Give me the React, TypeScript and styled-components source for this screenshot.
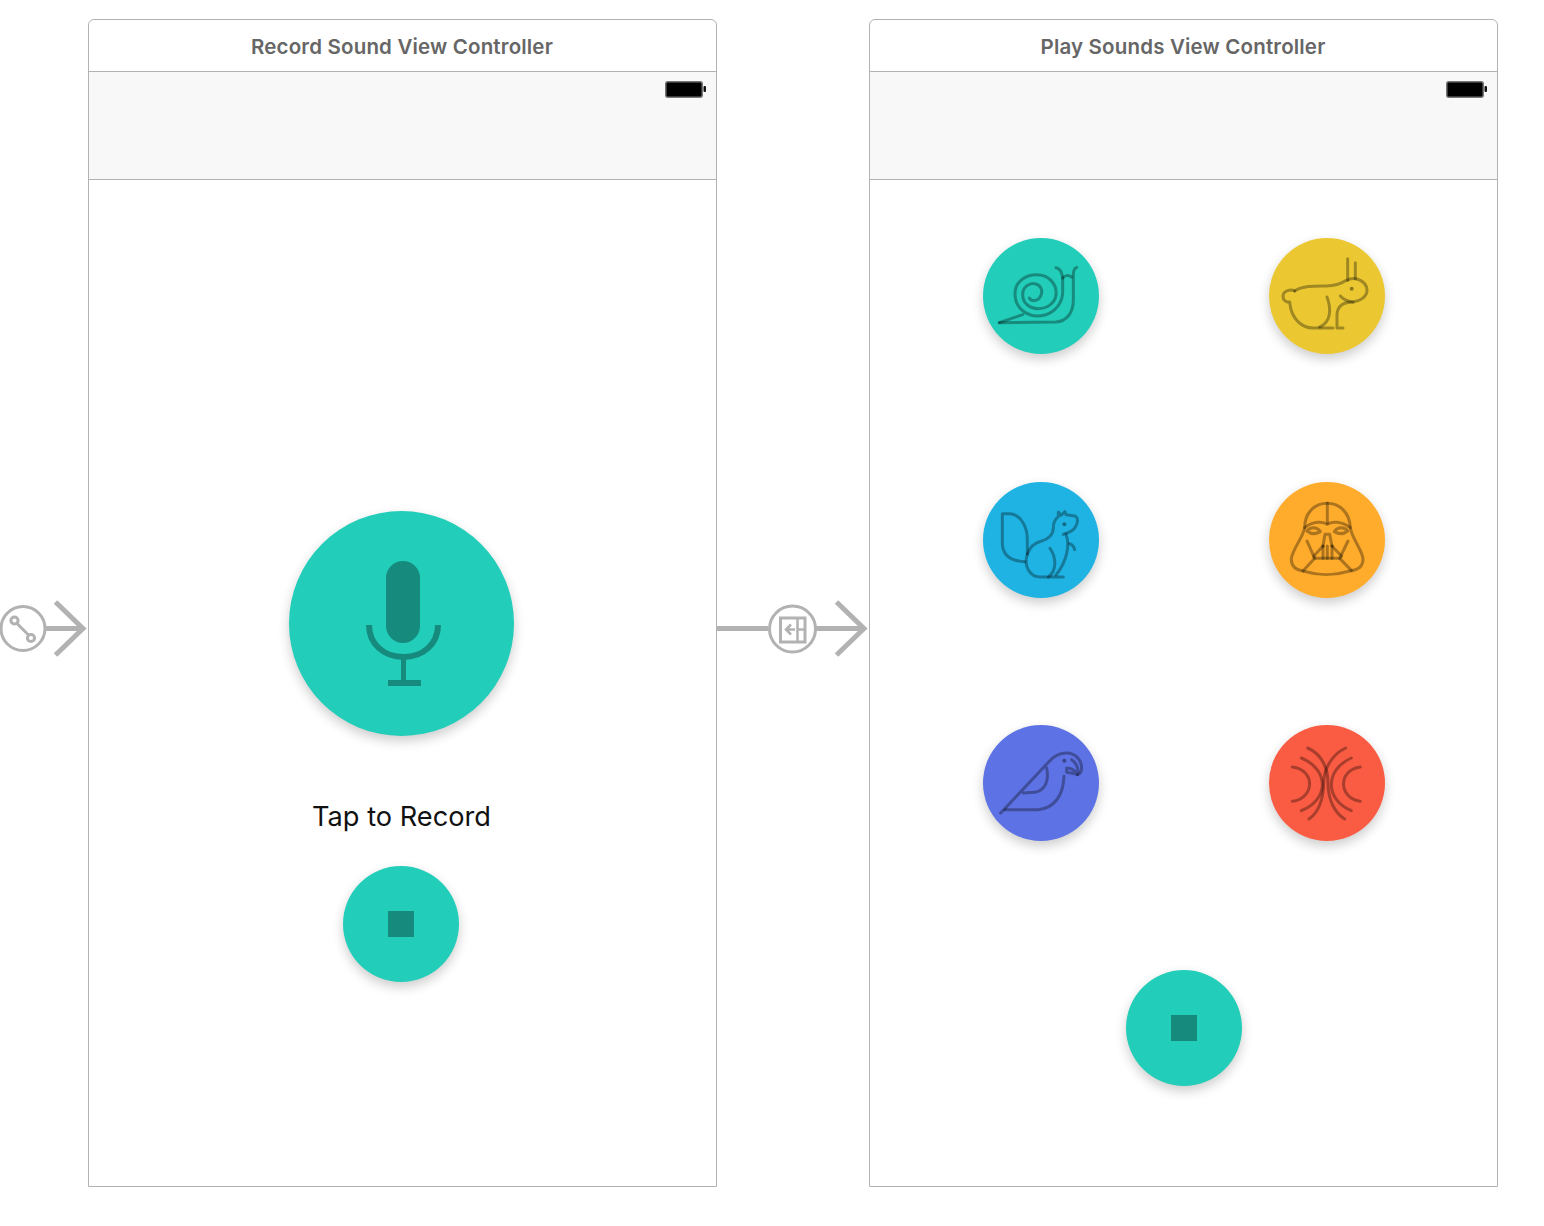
import React from "react";
import styled, { createGlobalStyle } from "styled-components";

const Global = createGlobalStyle`
  html, body { margin: 0; padding: 0; background: #fff; }
  body { overflow: hidden; font-family: "Inter", "Liberation Sans", sans-serif; }
`;

const Stage = styled.main`
  display: flex;
  align-items: flex-start;
  width: 1544px;
  height: 1226px;
  padding-top: 19px;
  box-sizing: border-box;
`;

const ConnectorSlot = styled.div<{ $width: number }>`
  flex: none;
  width: ${(p) => p.$width}px;
  height: 60px;
  margin-top: 579px;
  svg { display: block; }
`;

const Scene = styled.section`
  flex: none;
  display: flex;
  flex-direction: column;
  width: 629px;
  height: 1168px;
  box-sizing: border-box;
  border: 1px solid #b2b2b2;
  border-radius: 6px 6px 0 0;
`;

const SceneTitle = styled.header`
  flex: none;
  display: flex;
  align-items: center;
  justify-content: center;
  height: 49px;
  padding: 2px 1px 0 0;
  border-bottom: 1px solid #b2b2b2;
  font-size: 20.5px;
  font-weight: 600;
  letter-spacing: 0.17px;
  color: #666;
`;

const StatusArea = styled.div`
  flex: none;
  display: flex;
  justify-content: flex-end;
  align-items: flex-start;
  height: 98px;
  padding: 9px 10px 0 0;
  background: #f8f8f8;
  border-bottom: 1px solid #b2b2b2;
  svg { display: block; }
`;

const RecordBody = styled.div`
  flex: 1;
  display: flex;
  flex-direction: column;
  align-items: center;
  padding: 331px 2px 0 0;
`;

const PlayBody = styled.div`
  flex: 1;
  display: flex;
  flex-direction: column;
  padding-top: 58px;
`;

const SoundGrid = styled.div`
  display: grid;
  grid-template-columns: 116px 116px;
  column-gap: 170px;
  row-gap: 127.5px;
  margin-left: 113px;
`;

const StopRow = styled.div`
  display: flex;
  justify-content: center;
  margin-top: 129px;
`;

const RoundButton = styled.button<{ $size: number; $color: string }>`
  flex: none;
  display: flex;
  align-items: center;
  justify-content: center;
  width: ${(p) => p.$size}px;
  height: ${(p) => p.$size}px;
  padding: 0;
  border: 0;
  border-radius: 50%;
  background: ${(p) => p.$color};
  box-shadow: 0 5px 12px rgba(0, 0, 0, 0.2);
  svg { display: block; }
`;

const RecordStop = styled(RoundButton)`
  margin-right: 1px;
`;

const StopGlyph = styled.span`
  display: block;
  width: 26px;
  height: 26px;
  background: #168a7d;
`;

const TapLabel = styled.p`
  margin: 64px 0 32px;
  height: 34px;
  line-height: 34px;
  font-size: 27.2px;
  font-weight: 400;
  color: #111;
`;

const Line = styled.g`
  fill: none;
  stroke: rgba(0, 0, 0, 0.32);
  stroke-width: 9;
  stroke-linecap: round;
  stroke-linejoin: round;
`;

const Dot = styled.circle`
  fill: rgba(0, 0, 0, 0.4);
  stroke: none;
`;

const Gray = styled.g`
  fill: none;
  stroke: #b2b2b2;
`;

const Battery = () => (
  <svg width="41" height="18" viewBox="0 0 41 18">
    <rect x="0.75" y="0.75" width="36.5" height="15.5" rx="2" fill="#000" stroke="#777" strokeWidth="1.5" />
    <rect x="38.5" y="5" width="2.5" height="6" rx="1" fill="#111" />
  </svg>
);

const EntryArrow = () => (
  <svg width="88" height="60" viewBox="0 598 88 60">
    <Gray>
      <circle cx="23" cy="628.5" r="22" strokeWidth="3" />
      <path d="M45 628.5H83" strokeWidth="5" />
      <path d="M55.5 602L83 628.5L55.5 655" strokeWidth="5" />
      <circle cx="14.5" cy="620.5" r="3.6" strokeWidth="3" />
      <circle cx="31" cy="638" r="3.6" strokeWidth="3" />
      <path d="M17 623.5L28.500 635" strokeWidth="3" />
    </Gray>
  </svg>
);

const SegueArrow = () => (
  <svg width="152" height="60" viewBox="717 598 152 60">
    <Gray>
      <path d="M717 628.500H768" strokeWidth="5" />
      <circle cx="792.5" cy="629" r="23" strokeWidth="3" />
      <path d="M816 628.5H864" strokeWidth="5" />
      <path d="M836.5 602L864 628.5L836.5 655" strokeWidth="5" />
      <rect x="780.5" y="618" width="24.5" height="24" strokeWidth="3" />
      <path d="M797.5 618V642M797.500 629.500H805" strokeWidth="2.5" />
      <path d="M795 629.5H786M791 624.5L786 629.5L791 634.5" strokeWidth="2.5" />
    </Gray>
  </svg>
);

const Mic = () => (
  <svg width="225" height="225" viewBox="0 0 225 225">
    <g fill="#168a7d">
      <rect x="97" y="50" width="34" height="82" rx="17" />
      <rect x="112" y="146" width="5" height="24" />
      <rect x="99" y="169" width="33" height="6" />
    </g>
    <path d="M80 114C80 133 95 146 114.500 146C134 146 149 133 149 114" fill="none" stroke="#168a7d" strokeWidth="6" />
  </svg>
);

const Icon = ({ box, children }: { box: string; children: React.ReactNode }) => (
  <svg width="116" height="116" viewBox={box}>
    {children}
  </svg>
);

const Snail = () => (
  <Icon box="39 38 348 348">
    <Line>
      <path d="M88 292L258 290C290 288 310 262 310 225V160C310 140 310 130 320 126" />
      <path d="M88 292L158 268" />
      <path d="M258 127C272 129 276 142 278 158V205C274 246 240 272 205 272C165 272 135 245 135 205C135 170 165 148 200 148C235 148 262 175 258 210C254 235 230 250 205 250C175 250 158 230 158 208C158 185 178 172 195 175C212 178 220 195 212 212C205 228 185 230 178 218" />
      <path d="M278 158C284 150 296 148 304 155" />
    </Line>
  </Icon>
);

const Rabbit = () => (
  <Icon box="898 38 348 348">
    <Line>
      <path d="M1134 100V165M1157 112V160" />
      <path d="M975 197C1000 180 1040 182 1070 182C1100 182 1115 175 1130 165C1160 150 1192 170 1192 195C1192 215 1170 228 1150 230C1125 230 1105 240 1102 265V308H1120" />
      <path d="M1112 212C1120 222 1135 228 1150 230" />
      <path d="M975 197C965 190 940 195 940 213C940 225 950 232 960 230C965 285 1000 308 1030 308H1090" />
      <path d="M1072 215C1085 250 1085 290 1050 305" />
    </Line>
    <Dot cx="1146" cy="190" r="6" />
  </Icon>
);

const Squirrel = () => (
  <Icon box="39 33 348 348">
    <Line>
      <path d="M165 272C120 270 97 250 97 215V128H120C150 130 172 165 172 205V245" />
      <path d="M172 250C180 225 195 215 215 210C235 205 250 190 250 170C250 155 255 145 265 137L265 123L273 133L285 122L288 131L315 135C325 140 325 155 315 170C305 185 290 185 280 190" />
      <path d="M172 250C160 285 180 318 210 318H280" />
      <path d="M240 232C260 260 260 300 235 318" />
      <path d="M288 190C300 220 292 270 258 312" />
      <path d="M298 218C308 220 312 228 314 236" />
    </Line>
    <Dot cx="283" cy="160" r="6" />
  </Icon>
);

const Vader = () => (
  <Icon box="898 33 348 348">
    <Line>
      <path d="M1005 170C1005 125 1035 97 1073 97C1110 97 1140 125 1142 170C1145 200 1180 240 1180 265C1180 290 1160 298 1140 300C1090 315 1050 315 1000 300C985 298 965 290 965 265C965 240 1000 200 1005 170Z" />
      <path d="M1073 97V156" />
      <path d="M1005 170C1030 150 1060 150 1073 160C1085 150 1115 150 1142 170" />
      <path d="M1012 180C1022 167 1042 167 1052 182C1038 190 1024 190 1012 180Z" />
      <path d="M1094 182C1104 167 1124 167 1134 180C1122 190 1108 190 1094 182Z" />
      <path d="M1060 225L1066 190H1080L1087 225" />
      <path d="M1012 210L1035 262H1110L1135 210" />
      <path d="M1060 225V262M1073 225V262M1087 225V262" />
      <path d="M1060 225L1032 256M1087 225L1116 256" />
      <path d="M1035 262L1000 300M1110 262L1145 298" />
    </Line>
  </Icon>
);

const Parrot = () => (
  <Icon box="39 36 348 348">
    <Line>
      <path d="M92 300L235 148C250 130 270 120 290 120C315 120 335 140 335 165C335 175 330 185 322 185" />
      <path d="M105 290H205C255 285 280 245 282 190" />
      <path d="M160 240L195 238C225 232 238 205 230 165" />
      <path d="M305 140C320 150 328 170 322 185C315 170 305 165 290 165V178L320 183" />
    </Line>
    <Dot cx="283" cy="143" r="6" />
  </Icon>
);

const Echo = () => (
  <Icon box="898 36 348 348">
    <Line>
      <path d="M968 162C1037 170 1037 255 968 265" />
      <path d="M995 135C1079 170 1079 260 995 293" />
      <path d="M1014 105C1060 125 1075 170 1075 210C1075 260 1095 300 1125 318" />
      <path d="M1128 105C1085 125 1062 170 1062 210C1062 260 1045 300 1018 318" />
      <path d="M1145 135C1065 170 1065 260 1145 293" />
      <path d="M1172 162C1105 170 1105 255 1172 265" />
    </Line>
  </Icon>
);

const sounds = [
  { id: "snail", color: "#22cdb9", icon: <Snail /> },
  { id: "rabbit", color: "#ebc832", icon: <Rabbit /> },
  { id: "squirrel", color: "#1fb3e3", icon: <Squirrel /> },
  { id: "vader", color: "#ffac2c", icon: <Vader /> },
  { id: "parrot", color: "#5d72e4", icon: <Parrot /> },
  { id: "echo", color: "#fa5c43", icon: <Echo /> },
];

export default function App() {
  return (
    <>
      <Global />
      <Stage>
        <ConnectorSlot $width={88}>
          <EntryArrow />
        </ConnectorSlot>
        <Scene>
          <SceneTitle>Record Sound View Controller</SceneTitle>
          <StatusArea>
            <Battery />
          </StatusArea>
          <RecordBody>
            <RoundButton $size={225} $color="#22cdb9" aria-label="Record">
              <Mic />
            </RoundButton>
            <TapLabel>Tap to Record</TapLabel>
            <RecordStop $size={116} $color="#22cdb9" aria-label="Stop">
              <StopGlyph />
            </RecordStop>
          </RecordBody>
        </Scene>
        <ConnectorSlot $width={152}>
          <SegueArrow />
        </ConnectorSlot>
        <Scene>
          <SceneTitle>Play Sounds View Controller</SceneTitle>
          <StatusArea>
            <Battery />
          </StatusArea>
          <PlayBody>
            <SoundGrid>
              {sounds.map((s) => (
                <RoundButton key={s.id} $size={116} $color={s.color} aria-label={s.id}>
                  {s.icon}
                </RoundButton>
              ))}
            </SoundGrid>
            <StopRow>
              <RoundButton $size={116} $color="#22cdb9" aria-label="Stop">
                <StopGlyph />
              </RoundButton>
            </StopRow>
          </PlayBody>
        </Scene>
      </Stage>
    </>
  );
}
